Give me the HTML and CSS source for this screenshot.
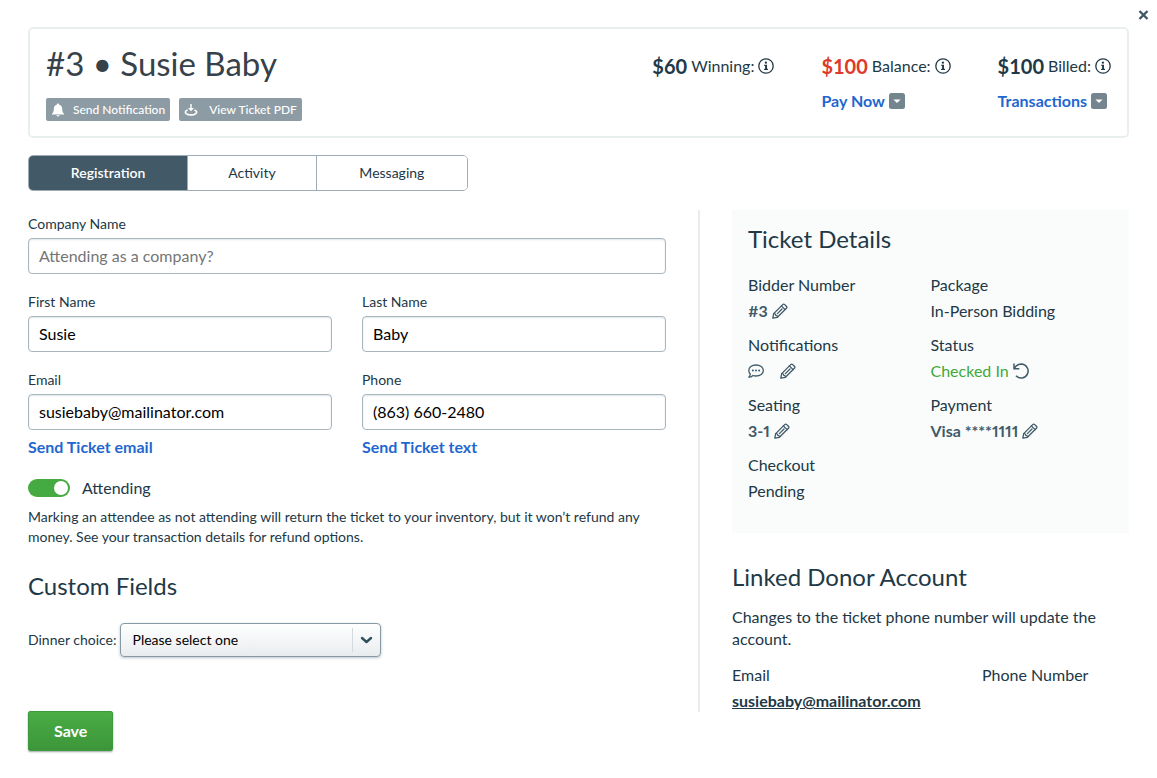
FILE: index.html
```
<!DOCTYPE html>
<html lang="en">
<head>
<meta charset="utf-8">
<title>Ticket #3 – Susie Baby</title>
<meta name="viewport" content="width=device-width, initial-scale=1">
<link rel="stylesheet" href="styles.css">
</head>
<body>
<svg class="sprite" aria-hidden="true">
  <symbol id="pencil" viewBox="0 0 16 16">
    <g fill="none" stroke="currentColor" stroke-width="1.3" stroke-linejoin="round" stroke-linecap="round">
      <path d="M.8 15.2 1.700 10.600 10.700 1.600Q11.700.6 12.700 1.600L14.400 3.300Q15.400 4.300 14.400 5.300L5.400 14.300Z"/>
      <path d="M1.700 10.600Q3.600 10.300 3.700 12.300 5.700 12.400 5.400 14.300M9.400 2.900 13.100 6.600M5.400 10.600 10 6"/>
    </g>
  </symbol>
  <symbol id="info" viewBox="0 0 16 16">
    <circle cx="8" cy="8" r="7.200" fill="none" stroke="currentColor" stroke-width="1.300"/>
    <circle cx="7.900" cy="4.700" r="1.150" fill="currentColor"/>
    <path d="M6.200 6.700H9V10.700H10V11.900H6.100V10.700H7.100V7.900H6.200Z" fill="currentColor"/>
  </symbol>
  <symbol id="drop" viewBox="0 0 16 16">
    <rect width="16" height="16" rx="2.500" fill="#74858f"/>
    <path d="M4.400 6.400h7.200L8 10Z" fill="#fff"/>
  </symbol>
</svg>

<div class="topbar">
  <button class="close" type="button" aria-label="Close">
    <svg width="11" height="10" viewBox="0 0 11 10"><path d="M1.500 1 9.500 9M9.500 1 1.500 9" stroke="currentColor" stroke-width="2.400"/></svg>
  </button>
</div>

<main class="page">
  <header class="summary">
    <div>
      <h1 class="name">#3 • Susie Baby</h1>
      <div class="actions">
        <button class="chip" type="button">
          <svg width="14" height="14" viewBox="0 0 14 14" fill="currentColor"><path d="M7 .5C7.700.5 8 .9 8 1.500 10.300 2.100 11.200 3.900 11.200 6 11.200 8.800 11.900 9.900 13 10.700V11.500H1V10.700C2.100 9.900 2.800 8.800 2.800 6 2.800 3.900 3.700 2.100 6 1.500 6 .9 6.300.5 7 .5ZM5.300 12.300H8.700Q8.300 13.500 7 13.500 5.700 13.500 5.300 12.300Z"/></svg>
          <span>Send Notification</span>
        </button>
        <button class="chip" type="button">
          <svg width="14" height="14" viewBox="0 0 14 14"><path d="M6.300 1H7.700V5H10L7 8.200 4 5H6.300Z" fill="currentColor"/><path d="M3.600 7C.9 8 1 9.500 2.200 10.600 4.500 12.400 9.500 12.400 11.800 10.600 13 9.500 13.100 8 10.400 7" fill="none" stroke="currentColor" stroke-width="1.700"/></svg>
          <span>View Ticket PDF</span>
        </button>
      </div>
    </div>
    <div class="stats">
      <div class="stat">
        <p class="figure"><strong>$60</strong> Winning: <svg class="icon"><use href="#info"/></svg></p>
      </div>
      <div class="stat">
        <p class="figure"><strong class="owed">$100</strong> Balance: <svg class="icon"><use href="#info"/></svg></p>
        <a class="link" href="#pay">Pay Now <svg class="icon"><use href="#drop"/></svg></a>
      </div>
      <div class="stat">
        <p class="figure"><strong>$100</strong> Billed: <svg class="icon"><use href="#info"/></svg></p>
        <a class="link" href="#transactions">Transactions <svg class="icon"><use href="#drop"/></svg></a>
      </div>
    </div>
  </header>

  <nav class="tabs">
    <button class="tab active" type="button">Registration</button>
    <button class="tab" type="button">Activity</button>
    <button class="tab" type="button">Messaging</button>
  </nav>

  <div class="columns">
    <form class="form">
      <div class="fields">
        <div class="field wide">
          <label for="company">Company Name</label>
          <input id="company" class="text" type="text" placeholder="Attending as a company?">
        </div>
        <div class="field">
          <label for="first">First Name</label>
          <input id="first" class="text" type="text" value="Susie">
        </div>
        <div class="field">
          <label for="last">Last Name</label>
          <input id="last" class="text" type="text" value="Baby">
        </div>
        <div class="field">
          <label for="email">Email</label>
          <input id="email" class="text" type="email" value="susiebaby@mailinator.com">
          <a class="link" href="#send-email">Send Ticket email</a>
        </div>
        <div class="field">
          <label for="phone">Phone</label>
          <input id="phone" class="text" type="tel" value="(863) 660-2480">
          <a class="link" href="#send-text">Send Ticket text</a>
        </div>
      </div>
      <label class="attending"><input class="switch" type="checkbox" checked> Attending</label>
      <p class="note">Marking an attendee as not attending will return the ticket to your inventory, but it won’t refund any money. See your transaction details for refund options.</p>
      <h2 class="heading">Custom Fields</h2>
      <div class="choice">
        <label for="dinner">Dinner choice:</label>
        <span class="select">
          <select id="dinner"><option>Please select one</option></select>
          <svg class="chevron" width="29" height="24" viewBox="0 0 29 24" fill="none"><path d="M.5 0V24" stroke="#d3dadd"/><path d="M10 10 14.500 14 19 10" stroke="#33505f" stroke-width="2.400" stroke-linecap="round" stroke-linejoin="round"/></svg>
        </span>
      </div>
      <button class="save" type="button">Save</button>
    </form>

    <aside class="side">
      <section class="ticket">
        <h2 class="heading">Ticket Details</h2>
        <dl class="details">
          <div><dt>Bidder Number</dt><dd class="strong">#3 <svg class="icon"><use href="#pencil"/></svg></dd></div>
          <div><dt>Package</dt><dd>In-Person Bidding</dd></div>
          <div><dt>Notifications</dt><dd class="strong spaced">
            <svg class="icon" viewBox="0 0 16 16"><path d="M8 2C12.300 2 15.300 4.400 15.300 7.500S12.300 13 8 13Q6.300 13 5 12.500 3.300 14.200.8 14.200 2.200 12.700 2.300 11 .8 9.500.8 7.500C.8 4.400 3.700 2 8 2Z" fill="none" stroke="currentColor" stroke-width="1.300" stroke-linejoin="round"/><g fill="currentColor"><circle cx="4.900" cy="7.600" r="1"/><circle cx="8" cy="7.600" r="1"/><circle cx="11.100" cy="7.600" r="1"/></g></svg>
            <svg class="icon"><use href="#pencil"/></svg></dd></div>
          <div><dt>Status</dt><dd class="strong"><span class="checked">Checked In</span> <svg class="icon" viewBox="0 0 16 16" fill="none" stroke="currentColor" stroke-width="1.500"><path d="M1 .5V5.800H6.300M1.400 5.500C3 2.300 5.400 1 8.300 1A7 7 0 1 1 3 12.800"/></svg></dd></div>
          <div><dt>Seating</dt><dd class="strong">3-1 <svg class="icon"><use href="#pencil"/></svg></dd></div>
          <div><dt>Payment</dt><dd class="strong">Visa ****1111 <svg class="icon"><use href="#pencil"/></svg></dd></div>
          <div><dt>Checkout</dt><dd>Pending</dd></div>
        </dl>
      </section>
      <section class="donor">
        <h2 class="heading">Linked Donor Account</h2>
        <p class="blurb">Changes to the ticket phone number will update the account.</p>
        <dl class="account">
          <div><dt>Email</dt><dd><a class="mail" href="mailto:susiebaby@mailinator.com">susiebaby@mailinator.com</a></dd></div>
          <div><dt>Phone Number</dt></div>
        </dl>
      </section>
    </aside>
  </div>
</main>
</body>
</html>
```

FILE: styles.css
```
* { box-sizing: border-box; }
body {
  margin: 0;
  background: #fff;
  color: #213846;
  font: 16px/22px Lato, "Liberation Sans", sans-serif;
}
h1, h2, p, dl, dd { margin: 0; }
button, input, select { font: inherit; color: inherit; }
button { cursor: pointer; }
.sprite { display: none; }
.icon { width: 16px; height: 16px; flex: none; }

.topbar { display: flex; justify-content: flex-end; padding: 8px 8px 0; height: 27px; }
.close { display: flex; align-items: center; height: 14px; padding: 0; border: 0; background: none; color: #3f5665; }

.page { padding: 0 28px 26px; }
.summary {
  display: flex;
  justify-content: space-between;
  border: 2px solid #e9efef;
  border-radius: 5px;
  padding: 15px 16px;
}
.name { font-size: 33px; line-height: 38px; font-weight: 400; color: #36414a; }
.actions { display: flex; gap: 9px; margin-top: 16px; }
.chip {
  display: flex;
  align-items: center;
  gap: 8px;
  height: 23px;
  padding: 0 5px;
  border: 0;
  border-radius: 2px;
  background: #8d9ba4;
  color: #fff;
  font-size: 12px;
  font-weight: 500;
}
.chip + .chip { gap: 11px; }
.stats { display: flex; gap: 47px; padding-top: 9px; }
.stat { display: flex; flex-direction: column; gap: 11px; }
.figure { display: flex; align-items: center; gap: 4px; line-height: 26px; }
.figure strong { font-size: 20px; }
.owed { color: #de3a2a; }
.link { display: flex; align-items: center; gap: 4px; color: #1f67cf; font-weight: 700; text-decoration: none; }

.tabs { display: grid; grid-template-columns: 159fr 129fr 152fr; max-width: 440px; height: 36px; margin-top: 17px; border: 1px solid #9eabb4; border-radius: 5px; overflow: hidden; }
.tab { border: 0; border-left: 1px solid #9eabb4; background: #fff; font-size: 14px; }
.tab:first-child { border-left: 0; }
.tab.active { background: #425968; color: #fff; font-weight: 600; }

.columns { display: grid; grid-template-columns: 638fr 431fr; gap: 32px; margin-top: 19px; }
.fields { display: grid; grid-template-columns: 1fr 1fr; gap: 18px 30px; padding-top: 4px; }
.wide { grid-column: 1 / -1; }
.field { display: flex; flex-direction: column; align-items: flex-start; font-size: 14px; }
.field label { line-height: 20px; margin-bottom: 4px; }
.field .link { font-size: 16px; margin-top: 6px; }
.text {
  width: 100%;
  height: 36px;
  padding: 0 10px 2px;
  border: 1px solid #a9b6be;
  border-radius: 4px;
  background: #fff;
  box-shadow: inset 0 1px 2px #dfe5e8;
  color: #000;
  font-size: 16px;
}
.text::placeholder { color: #757575; opacity: 1; }
.attending { display: flex; align-items: center; gap: 12px; margin-top: 19px; }
.switch { appearance: none; display: flex; width: 42px; height: 18px; margin: 0; padding: 2px; border-radius: 9px; background: #a9b6be; }
.switch:checked { justify-content: flex-end; background: #46aa42; }
.switch::before { content: ""; width: 14px; height: 14px; border-radius: 50%; background: #fff; }
.note { margin-top: 8px; font-size: 14px; line-height: 20px; }
.heading { font-size: 24px; line-height: 30px; font-weight: 400; }
.form .heading { margin-top: 24px; }
.choice { display: flex; align-items: center; gap: 3px; margin-top: 22px; font-size: 14px; }
.select { display: grid; align-items: center; }
.select select {
  grid-area: 1 / 1;
  appearance: none;
  width: 261px;
  height: 34px;
  padding: 0 40px 0 12px;
  border: 1px solid #8799a4;
  border-radius: 4px;
  background: linear-gradient(#fff, #e9ecee);
  box-shadow: 0 1px 3px #b9c3c9;
  color: #000;
}
.chevron { grid-area: 1 / 1; justify-self: end; pointer-events: none; }
.save {
  margin-top: 54px;
  height: 40px;
  padding: 0 25px;
  border: 1px solid #3e9b3b;
  border-radius: 2px;
  background: linear-gradient(#49ad44, #3c9639);
  box-shadow: 0 1px 2px #9aa5ab;
  color: #fff;
  font-weight: 700;
}

.side { align-self: start; border-left: 2px solid #e6ecf0; padding-left: 32px; }
.ticket { background: #fafcfb; padding: 14px 16px; min-height: 323px; }
.details { display: grid; grid-template-columns: 1fr 1fr; gap: 8px 0; margin-top: 18px; line-height: 26px; }
.details dd { display: flex; align-items: center; gap: 4px; min-height: 26px; }
.details .spaced { gap: 16px; }
.strong { color: #3f5a69; font-weight: 700; font-variant-numeric: proportional-nums; }
.checked { color: #3fa93a; font-weight: 400; }
.donor { padding-top: 29px; }
.blurb { margin-top: 14px; }
.account { display: grid; grid-template-columns: 250fr 147fr; margin-top: 12px; }
.account dt { line-height: 26px; }
.account dd { margin-top: 2px; }
.mail { color: #213846; font-weight: 700; }
```
